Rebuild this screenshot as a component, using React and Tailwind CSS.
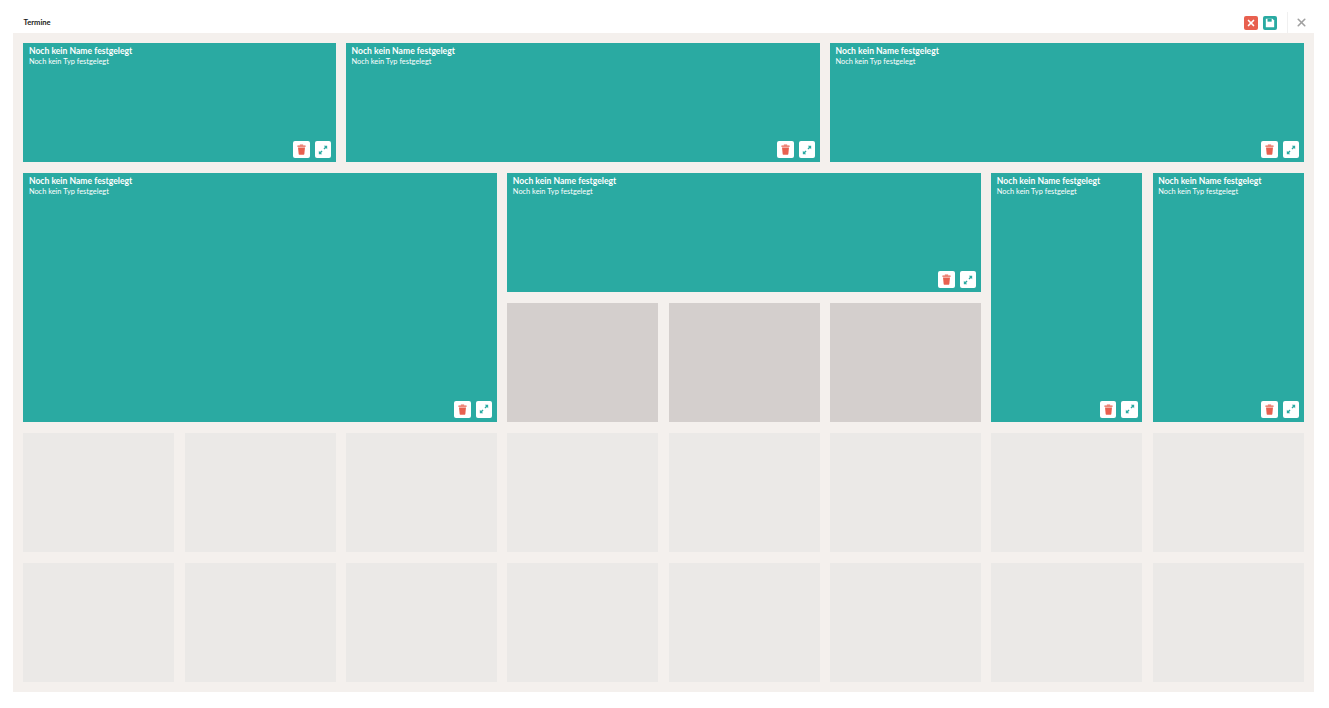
import React from "react";
import { X } from "lucide-react";

function Card({ className }) {
  return (
    <div className={`relative flex flex-col bg-[#2aaaa2] pl-[5.5px] pr-[4.5px] pt-[2px] text-white ${className}`}>
      <div className="text-[8.6px] leading-[12px] font-bold">Noch kein Name festgelegt</div>
      <div className="text-[7.4px] leading-[9px]">Noch kein Typ festgelegt</div>
      <div className="mt-auto mb-[4.5px] flex justify-end gap-[5px]">
        <div className="flex h-[16.5px] w-[16.5px] items-center justify-center rounded-[2px] bg-white">
          <svg viewBox="0 0 12 12" className="h-[11px] w-[11px]" fill="#e8604f">
            <path d="M4.2 1.7V.6h3.6v1.1z" />
            <rect x="1.5" y="1.6" width="9" height="1.5" rx=".4" />
            <path d="M2.2 3.7h7.6l-.7 7.3a.7.7 0 0 1-.7.6H3.6a.7.7 0 0 1-.7-.6z" />
          </svg>
        </div>
        <div className="flex h-[16.5px] w-[16.5px] items-center justify-center rounded-[2px] bg-white">
          <svg viewBox="0 0 12 12" className="h-[10px] w-[10px]" fill="#2aaaa2">
            <path d="M7 1h4v4L9.6 3.6 7.8 5.4 6.6 4.2 8.4 2.4z" />
            <path d="M5 11H1V7l1.4 1.4 1.8-1.8 1.2 1.2-1.8 1.8z" />
          </svg>
        </div>
      </div>
    </div>
  );
}

export default function App() {
  const dark = ["col-start-3", "col-start-4", "col-start-5"];
  return (
    <div className="flex h-[708px] w-[1329px] flex-col bg-white font-['Lato','Noto_Sans',sans-serif]">
      <div className="flex h-[33px] items-center justify-between pl-[23.5px] pr-[21.5px] pt-[13px]">
        <span className="text-[7.6px] font-bold text-[#1a1a1a]">Termine</span>
        <div className="-mt-[1px] flex items-center">
          <div className="flex h-[14px] w-[14px] items-center justify-center rounded-[2px] bg-[#e8604f]">
            <X size={10} color="white" strokeWidth={4} />
          </div>
          <div className="ml-[5px] flex h-[14px] w-[14px] items-center justify-center rounded-[2px] bg-[#2aaaa2]">
            <svg viewBox="0 0 12 12" className="h-[10px] w-[10px]" fill="white">
              <path d="M1 1h8l2 2v8H1z" />
              <rect x="3" y="1" width="5" height="3.4" fill="#2aaaa2" />
            </svg>
          </div>
          <div className="ml-[10px] h-[21px] w-px bg-[#f0f0f0]" />
          <X size={13} color="#a0a0a0" strokeWidth={3} className="ml-[6.5px]" />
        </div>
      </div>
      <div className="mx-[13px] h-[659px] w-[1301px] bg-[#f4f0ed] px-[10.4px] py-[10px]">
        <div className="grid h-full grid-cols-8 grid-rows-5 gap-[10.4px]">
          <Card className="col-span-2" />
          <Card className="col-span-3" />
          <Card className="col-span-3" />
          <Card className="col-span-3 row-span-2" />
          <Card className="col-span-3" />
          <Card className="row-span-2" />
          <Card className="row-span-2" />
          {dark.map((c) => (
            <div key={c} className="bg-[#d4cfcd]" />
          ))}
          {Array.from({ length: 16 }).map((_, i) => (
            <div key={i} className="bg-[#ebe9e7]" />
          ))}
        </div>
      </div>
    </div>
  );
}
